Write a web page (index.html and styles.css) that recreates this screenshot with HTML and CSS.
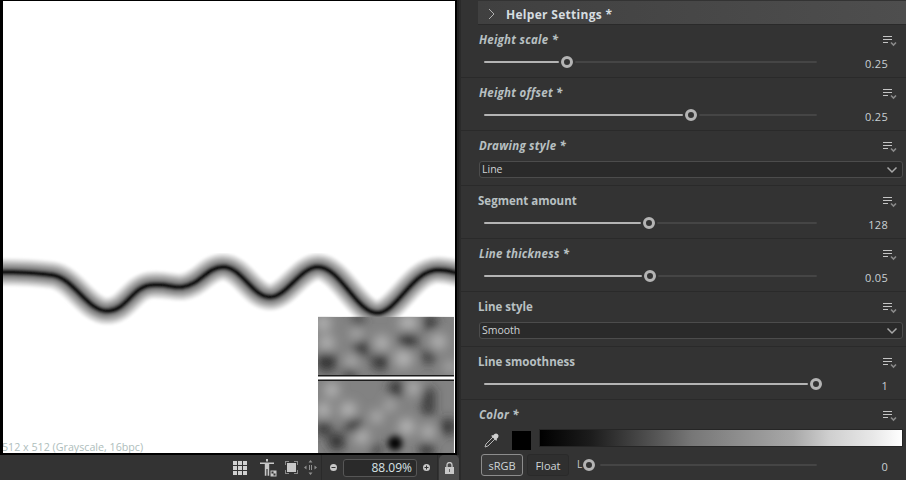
FILE: index.html
```html
<!DOCTYPE html>
<html lang="en">
<head>
<meta charset="utf-8">
<title>Helper Settings</title>
<link rel="stylesheet" href="styles.css">
</head>
<body>
<svg class="defs" width="0" height="0" aria-hidden="true">
  <symbol id="menu" viewBox="0 0 14 12">
    <path d="M0 1.5h9M0 4.5h9M0 7.5h5" stroke="#c4c4c4" fill="none"/>
    <path d="M8 7.5l2.5 2.5L13 7.5" stroke="#8a8a8a" stroke-width="1.6" fill="none"/>
  </symbol>
  <symbol id="chev" viewBox="0 0 12 8">
    <path d="M1.5 1.5L6 6l4.5-4.5" stroke="#a8a8a8" stroke-width="1.5" fill="none"/>
  </symbol>
  <path id="wavePath" d="M-6 272 C15 272 35 273 50 275 C72 278 85 311 105 311 C125 311 130 286 150 285 C165 284 172 288 180 287 C198 285 205 267 221 267 C240 267 250 297 268 297 C285 297 298 267 316 267 C338 267 355 313 375 313 C395 313 410 270 436 270 C445 270 450 272 460 274"/>
</svg>

<main class="app">
  <section class="viewport">
    <div class="stage">
      <svg class="canvas" viewBox="1 1 452 452" width="452" height="452">
        <defs>
          <filter id="soft" x="-5%" y="-30%" width="110%" height="160%"><feGaussianBlur stdDeviation="1.1"/></filter>
          <filter id="cloud" x="-100%" y="-100%" width="300%" height="300%"><feGaussianBlur stdDeviation="16"/></filter>
          <filter id="spot" x="-150%" y="-150%" width="400%" height="400%"><feGaussianBlur stdDeviation="10"/></filter>
          <clipPath id="clipTop"><rect x="24" y="20" width="408" height="175"/></clipPath>
          <clipPath id="clipBottom"><rect x="24" y="213" width="408" height="217"/></clipPath>
        </defs>
        <g fill="none" filter="url(#soft)">
          <use href="#wavePath" stroke="#ececec" stroke-width="28"/>
          <use href="#wavePath" stroke="#d0d0d0" stroke-width="24"/>
          <use href="#wavePath" stroke="#adadad" stroke-width="19"/>
          <use href="#wavePath" stroke="#8c8c8c" stroke-width="13.5"/>
          <use href="#wavePath" stroke="#555" stroke-width="7.5"/>
          <use href="#wavePath" stroke="#000" stroke-width="3.5"/>
        </g>
        <g transform="translate(308 310) scale(0.3333)">
          <rect x="24" y="195" width="408" height="3" fill="#1c1c1c"/>
          <rect x="24" y="198" width="408" height="3" fill="#8c8c8c"/>
          <rect x="24" y="201" width="408" height="6" fill="#fff"/>
          <rect x="24" y="207" width="408" height="3" fill="#8c8c8c"/>
          <rect x="24" y="210" width="408" height="3" fill="#1c1c1c"/>
          <g clip-path="url(#clipTop)">
            <rect x="24" y="20" width="408" height="175" fill="#828282"/>
            <g filter="url(#cloud)">
              <g fill="#b4b4b4">
                <circle cx="40" cy="40" r="24"/><circle cx="295" cy="40" r="28"/><circle cx="215" cy="100" r="24"/>
                <circle cx="280" cy="145" r="28"/><circle cx="385" cy="95" r="24"/><circle cx="50" cy="100" r="24"/>
                <circle cx="140" cy="70" r="18"/><circle cx="125" cy="155" r="20"/><circle cx="420" cy="170" r="16"/>
              </g>
              <g fill="#2e2e2e">
                <circle cx="155" cy="115" r="24"/><circle cx="295" cy="90" r="28"/><circle cx="50" cy="155" r="30"/>
                <circle cx="210" cy="155" r="26"/><circle cx="360" cy="38" r="22"/><circle cx="355" cy="140" r="20"/>
                <circle cx="145" cy="32" r="18"/><circle cx="120" cy="192" r="20"/>
              </g>
            </g>
          </g>
          <g clip-path="url(#clipBottom)">
            <rect x="24" y="213" width="408" height="217" fill="#828282"/>
            <g filter="url(#cloud)">
              <g fill="#b8b8b8">
                <circle cx="65" cy="240" r="22"/><circle cx="115" cy="300" r="24"/><circle cx="40" cy="300" r="22"/>
                <circle cx="310" cy="235" r="20"/><circle cx="290" cy="350" r="24"/><circle cx="155" cy="380" r="22"/>
                <circle cx="355" cy="365" r="20"/><circle cx="200" cy="320" r="18"/><circle cx="240" cy="285" r="16"/>
              </g>
              <g fill="#2a2a2a">
                <circle cx="260" cy="235" r="24"/><circle cx="355" cy="255" r="20"/><circle cx="355" cy="295" r="20"/>
                <circle cx="80" cy="395" r="26"/><circle cx="415" cy="350" r="24"/><circle cx="130" cy="345" r="24"/>
                <circle cx="350" cy="420" r="22"/><circle cx="40" cy="355" r="22"/><circle cx="200" cy="420" r="16"/>
              </g>
            </g>
            <circle cx="255" cy="400" r="22" fill="#000" filter="url(#spot)"/>
          </g>
        </g>
      </svg>
      <span class="dims">512 x 512 (Grayscale, 16bpc)</span>
    </div>
    <div class="toolbar">
      <svg class="tool tool-grid" width="14" height="14" viewBox="0 0 14 14"><path fill="#d0d0d0" d="M0 0h4v4H0zM5 0h4v4H5zM10 0h4v4h-4zM0 5h4v4H0zM5 5h4v4H5zM10 5h4v4h-4zM0 10h4v4H0zM5 10h4v4H5zM10 10h4v4h-4z"/></svg>
      <svg class="tool tool-fig" width="17" height="18" viewBox="0 0 17 18"><path fill="#c8c8c8" d="M6 0h2v2.5H6zM0 3.5h14v1.5H9.2v11.8H7.6V10H6.4v6.8H4.8V5H0z"/><path fill="#c8c8c8" d="M10.5 11.5h6v6h-6z"/><path fill="#333" d="M11.5 12.5h2v2h-2zM13.5 14.5h2v2h-2z"/></svg>
      <svg class="tool tool-frame" width="13" height="13" viewBox="0 0 13 13"><path fill="#8a8a8a" d="M0 0h4v1H1v3H0zM9 0h4v4h-1V1H9zM0 9h1v3h3v1H0zM12 9h1v4H9v-1h3z"/><path fill="#c8c8c8" d="M2 2h9v9H2z"/></svg>
      <svg class="tool tool-move" width="13" height="15" viewBox="0 0 13 15"><path fill="#8f8f8f" d="M6.5 0l2 2.5h-4zM6.5 15l-2-2.5h4zM0 7.5L2.5 5.5v4zM13 7.5L10.5 5.5v4zM5 5h1v5H5zM7 5h1v5H7z"/></svg>
      <span class="divider"></span>
      <svg class="tool tool-zoom" width="7" height="7" viewBox="0 0 7 7"><circle cx="3.5" cy="3.5" r="3.5" fill="#c8c8c8"/><path d="M1.5 3.5h4" stroke="#333"/></svg>
      <div class="zoom-field">88.09%</div>
      <svg class="tool tool-zoom" width="7" height="7" viewBox="0 0 7 7"><circle cx="3.5" cy="3.5" r="3.5" fill="#c8c8c8"/><path d="M1.5 3.5h4M3.5 1.5v4" stroke="#333"/></svg>
      <span class="divider divider-end"></span>
      <button class="lock" type="button" aria-label="Lock">
        <svg width="9" height="12" viewBox="0 0 9 12"><path d="M2 5V3a2.5 2.5 0 0 1 5 0v2" stroke="#c8c8c8" stroke-width="1.3" fill="none"/><path fill="#c8c8c8" d="M0 5h9v7H0z"/><path fill="#666" d="M4 7h1v3H4z"/></svg>
      </button>
    </div>
  </section>

  <aside class="panel">
    <header class="group-head">
      <svg width="7" height="12" viewBox="0 0 7 12"><path d="M1 1l5 5-5 5" stroke="#b0b0b0" fill="none"/></svg>
      <span>Helper Settings *</span>
    </header>

    <section class="row">
      <div class="row-head"><span class="label label-mod">Height scale *</span><svg class="menu" width="14" height="12"><use href="#menu"/></svg></div>
      <div class="slider"><span class="fill" style="width:75px"></span><span class="thumb"></span><span class="rest"></span><span class="value">0.25</span></div>
    </section>

    <section class="row">
      <div class="row-head"><span class="label label-mod">Height offset *</span><svg class="menu" width="14" height="12"><use href="#menu"/></svg></div>
      <div class="slider"><span class="fill" style="width:199px"></span><span class="thumb"></span><span class="rest"></span><span class="value">0.25</span></div>
    </section>

    <section class="row row-tall">
      <div class="row-head"><span class="label label-mod">Drawing style *</span><svg class="menu" width="14" height="12"><use href="#menu"/></svg></div>
      <div class="select"><span>Line</span><svg width="12" height="8"><use href="#chev"/></svg></div>
    </section>

    <section class="row">
      <div class="row-head"><span class="label">Segment amount</span><svg class="menu" width="14" height="12"><use href="#menu"/></svg></div>
      <div class="slider"><span class="fill" style="width:157px"></span><span class="thumb"></span><span class="rest"></span><span class="value">128</span></div>
    </section>

    <section class="row">
      <div class="row-head"><span class="label label-mod">Line thickness *</span><svg class="menu" width="14" height="12"><use href="#menu"/></svg></div>
      <div class="slider"><span class="fill" style="width:158px"></span><span class="thumb"></span><span class="rest"></span><span class="value">0.05</span></div>
    </section>

    <section class="row row-tall">
      <div class="row-head"><span class="label">Line style</span><svg class="menu" width="14" height="12"><use href="#menu"/></svg></div>
      <div class="select"><span>Smooth</span><svg width="12" height="8"><use href="#chev"/></svg></div>
    </section>

    <section class="row">
      <div class="row-head"><span class="label">Line smoothness</span><svg class="menu" width="14" height="12"><use href="#menu"/></svg></div>
      <div class="slider"><span class="fill" style="width:324px"></span><span class="thumb thumb-max"></span><span class="value">1</span></div>
    </section>

    <section class="row row-color">
      <div class="row-head row-head-color"><span class="label label-mod">Color *</span><svg class="menu" width="14" height="12"><use href="#menu"/></svg></div>
      <div class="color-line">
        <svg class="dropper" width="17" height="17" viewBox="0 0 17 17"><path d="M9 6L2 13l-1 3 3-1 7-7" stroke="#b8b8b8" fill="none"/><path d="M9 4.5l1.5-1.5a2.6 2.6 0 0 1 3.6 3.6L12.6 8l.5 1-1 .8-4.8-4.8.8-1z" fill="#cfcfcf"/></svg>
        <span class="swatch"></span>
        <span class="ramp"></span>
      </div>
      <div class="color-mode">
        <button class="mode mode-on" type="button">sRGB</button>
        <button class="mode" type="button">Float</button>
        <div class="slider slider-l"><span class="channel">L</span><span class="thumb thumb-l"></span><span class="rest"></span><span class="value">0</span></div>
      </div>
    </section>
  </aside>
</main>
</body>
</html>
```

FILE: styles.css
```css
* { box-sizing: border-box; }

html, body {
  margin: 0;
  height: 100%;
  overflow: hidden;
  background: #333;
}

body {
  font-family: "Open Sans", "Noto Sans", sans-serif;
  font-size: 11px;
  color: #c8c8c8;
}

.defs { position: absolute; }

.app {
  display: flex;
  width: 906px;
  height: 480px;
}

.viewport {
  flex: 0 0 459px;
  display: flex;
  flex-direction: column;
}

.stage {
  position: relative;
  width: 457px;
  height: 455px;
  border: solid #000;
  border-width: 1px 2px 2px 3px;
  background: #fff;
  box-shadow: 2px 0 0 #222;
  overflow: hidden;
}

.canvas { display: block; }

.dims {
  position: absolute;
  left: -1px;
  bottom: -1px;
  font-size: 10.7px;
  color: #aebdbb;
  line-height: 14px;
  white-space: nowrap;
}

.toolbar {
  flex: 1;
  display: flex;
  align-items: center;
  justify-content: flex-end;
  background: #333;
  overflow: hidden;
}

.tool { flex: none; }
.tool-grid { margin-right: 13px; }
.tool-fig { margin-right: 8px; }
.tool-frame { margin-right: 6px; }
.tool-move { margin-right: 4px; }
.tool-zoom { margin: 0 8px 0 8px; }

.divider {
  width: 1px;
  height: 25px;
  background: #2a2a2a;
}

.divider-end { margin: 0 1px 0 3px; }

.zoom-field {
  width: 74px;
  height: 18px;
  margin-left: -2px;
  padding-right: 4px;
  border: 1px solid #565656;
  border-radius: 3px;
  background: #2a2a2a;
  color: #d8e2e6;
  font-size: 12px;
  line-height: 16px;
  text-align: right;
}

.tool-zoom + .zoom-field + .tool-zoom { margin: 0 4px 0 6px; }

.lock {
  width: 20px;
  height: 25px;
  padding: 0;
  margin: 0;
  border: 0;
  border-radius: 5px 5px 0 0;
  background: #4a4a4a;
  display: flex;
  align-items: center;
  justify-content: center;
}

.panel {
  flex: 1;
  min-width: 0;
  border-left: 2px solid #2a2a2a;
  padding-top: 1px;
  background: #333;
  overflow: hidden;
}

.group-head {
  height: 24px;
  margin-left: 17px;
  padding: 3px 0 0 10px;
  display: flex;
  align-items: center;
  gap: 11px;
  background: linear-gradient(90deg, #404040, #4e4e4e);
  border-bottom: 1px solid #2a2a2a;
  color: #d6dde0;
  font-size: 12px;
  font-weight: 700;
  letter-spacing: 0.3px;
}

.row {
  height: 53px;
  padding: 7px 10px 0 17px;
  border-bottom: 1px solid #2a2a2a;
}

.row-tall { height: 55px; }
.row-color { height: 80px; border-bottom: 0; }

.row-head {
  height: 16px;
  display: flex;
  align-items: center;
  justify-content: space-between;
}

.label {
  color: #b8c0c2;
  font-size: 11.5px;
  font-weight: 700;
  line-height: 16px;
}

.label-mod {
  font-style: italic;
  margin-left: 1px;
  letter-spacing: 0.25px;
}

.menu { margin-right: -1px; margin-top: 1px; }

.slider {
  height: 14px;
  margin: 7px 0 0 6px;
  display: flex;
  align-items: center;
}

.fill, .rest { display: block; height: 2px; border-radius: 1px; }
.fill { flex: none; background: #b4b4b4; }
.rest { flex: 1; background: #454545; }

.thumb {
  flex: none;
  width: 12px;
  height: 12px;
  margin: 0 2px;
  border: 3px solid #b4b4b4;
  border-radius: 50%;
  background: #333;
}

.thumb-max { margin-right: -5px; }

.value {
  flex: 0 0 71px;
  margin-right: 8px;
  color: #c8d0d4;
  font-size: 11px;
  letter-spacing: 0.3px;
  text-align: right;
  padding-top: 2px;
}

.select {
  height: 17px;
  margin: 7px -7px 0 1px;
  padding: 0 4px 0 2px;
  display: flex;
  align-items: center;
  justify-content: space-between;
  border: 1px solid #4c4c4c;
  border-radius: 3px;
  background: #2a2a2a;
  color: #d0d4d6;
  font-size: 10.5px;
  line-height: 15px;
}

.color-line {
  height: 21px;
  margin: 6px -7px 0 6px;
  display: flex;
  align-items: flex-start;
}

.dropper { margin: 2px 11px 0 0; }

.swatch {
  width: 19px;
  height: 19px;
  margin: 2px 8px 0 0;
  background: #000;
}

.ramp {
  flex: 1;
  height: 18px;
  border: 1px solid #262626;
  background: linear-gradient(90deg, #000 0, #1c1c1c 14%, #555 32%, #777 42%, #a8a8a8 70%, #cfcfcf 80%, #e8e8e8 92%, #fff 100%);
}

.color-mode {
  display: flex;
  align-items: center;
  margin: 4px 0 0 3px;
  gap: 4px;
}

.mode {
  width: 42px;
  height: 22px;
  padding: 0;
  border: 1px solid #2a2a2a;
  border-radius: 3px;
  background: #2f2f2f;
  color: #d0d6d8;
  font: 11px "Open Sans", "Noto Sans", sans-serif;
}

.mode-on {
  border-color: #8c8c8c;
  background: #3a3a3a;
}

.slider-l {
  flex: 1;
  margin: 0 0 0 4px;
}

.channel {
  align-self: flex-start;
  font-size: 10px;
  line-height: 12px;
  color: #c8c8c8;
}

.thumb-l { margin: 0 5px 0 1px; }
```
